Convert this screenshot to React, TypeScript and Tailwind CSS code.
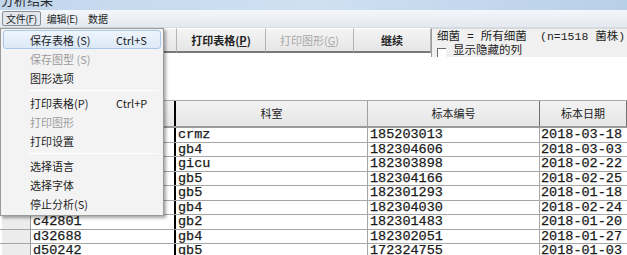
import React from "react";

const rows: [string, string, string, string][] = [
  ["a10473", "crmz", "185203013", "2018-03-18"],
  ["b20516", "gb4", "182304606", "2018-03-03"],
  ["b31902", "gicu", "182303898", "2018-02-22"],
  ["c10277", "gb5", "182304166", "2018-02-25"],
  ["c23415", "gb5", "182301293", "2018-01-18"],
  ["c30964", "gb4", "182304030", "2018-02-24"],
  ["c42801", "gb2", "182301483", "2018-01-20"],
  ["d32688", "gb4", "182302051", "2018-01-27"],
  ["d50242", "gb5", "172324755", "2018-01-03"],
];

function ToolButton({ w, label, mn, disabled }: { w: string; label: string; mn?: string; disabled?: boolean }) {
  return (
    <div
      className={`${w} h-[25px] shrink-0 flex items-center justify-center bg-gradient-to-b from-[#f4f4f4] to-[#e6e6e6] border-r border-[#b4b4b4] border-b-2 border-b-[#7a7a7a] border-t border-t-[#ffffff] text-[11px] leading-[14px] ${disabled ? "text-[#a8a8a8] font-normal" : "text-[#222] font-bold"}`}
    >
      <span>
        {label}
        {mn ? (
          <>
            (<u>{mn}</u>)
          </>
        ) : null}
      </span>
    </div>
  );
}

function MenuItem({ label, shortcut, disabled, active }: { label: string; shortcut?: string; disabled?: boolean; active?: boolean }) {
  return (
    <div
      className={`h-[19px] mx-[2px] flex items-center rounded-[3px] border ${active ? "border-[#aac8ea] bg-gradient-to-b from-[#eef5fd] to-[#dce9f8]" : "border-transparent"} ${disabled ? "text-[#9c9c9c]" : "text-[#1e1e1e]"}`}
    >
      <span className="pl-[26px] w-[112px] whitespace-pre">{label}</span>
      {shortcut ? <span className="whitespace-pre">{shortcut}</span> : null}
    </div>
  );
}

function Sep() {
  return (
    <div className="h-[6px] flex items-center pl-[28px] pr-[4px]">
      <div className="h-px w-full bg-[#dcdcdc] border-b border-b-white" />
    </div>
  );
}

export default function App() {
  return (
    <div className="relative w-[627px] h-[255px] overflow-hidden bg-white [font-family:'Noto_Sans_CJK_SC','Liberation_Sans',sans-serif] text-[11px]">
      {/* title bar */}
      <div className="h-[10px] overflow-hidden bg-gradient-to-r from-[#c2d6ec] via-[#cfe0f2] to-[#b8cfe8]">
        <div className="-mt-[7px] pl-[1px] text-[13px] leading-[14px] text-[#2a2a2a]">分析结果</div>
      </div>
      {/* menu bar */}
      <div className="h-[18px] flex items-center bg-gradient-to-b from-[#f3f6fa] to-[#e4e9f0] border-b border-[#d5dbe3] text-[10px] text-[#1e1e1e]">
        <div className="ml-[2px] h-[15px] px-[3px] flex items-center border border-[#8a8f96] bg-[#e2e7ee] rounded-[2px] tracking-[-0.3px]">文件(F)</div>
        <div className="ml-[5px] px-[1px] tracking-[-0.3px]">编辑(E)</div>
        <div className="ml-[8px] px-[1px]">数据</div>
      </div>
      {/* toolbar */}
      <div className="h-[29px] flex items-start">
        <ToolButton w="w-[88px]" label="保存表格" mn="S" />
        <ToolButton w="w-[89px]" label="保存图型" mn="G" />
        <ToolButton w="w-[89px]" label="打印表格" mn="P" />
        <ToolButton w="w-[88px]" label="打印图形" mn="G" disabled />
        <ToolButton w="w-[77px]" label="继续" />
        <div className="flex-1 h-[29px] bg-[#f0f0f0] border-l border-[#9a9a9a] border-t border-t-[#d8d8d8] pl-[5px] pt-[1px] text-[11.5px] text-[#1e1e1e] [font-family:'Liberation_Mono','Noto_Sans_CJK_SC',monospace]">
          <div className="flex h-[14px] items-center leading-[14px]">
            <span className="w-[103px] whitespace-pre">细菌 = 所有细菌</span>
            <span className="whitespace-pre">(n=1518 菌株)</span>
          </div>
          <div className="flex h-[13px] items-center leading-[13px]">
            <span className="w-[9px] h-[9px] border-l border-t border-[#6a6a6a] bg-white mt-[3px]" />
            <span className="ml-[7px]">显示隐藏的列</span>
          </div>
        </div>
      </div>
      {/* white gap */}
      <div className="h-[43px]" />
      {/* table */}
      <div className="flex flex-col">
        <div className="flex h-[28px] bg-gradient-to-b from-[#f2f2f2] to-[#e6e6e6] border-t border-[#a8a8a8] border-b-2 border-b-[#9a9a9a] text-[#222]">
          <div className="w-[31px] border-r border-[#a0a0a0]" />
          <div className="w-[145px] border-r-2 border-r-black flex items-center justify-center">菌株编号</div>
          <div className="w-[192px] border-r border-[#a0a0a0] flex items-center justify-center">科室</div>
          <div className="w-[172px] border-r border-[#707070] flex items-center justify-center">标本编号</div>
          <div className="flex-1 flex items-center justify-center border-r border-[#707070]">标本日期</div>
        </div>
        {rows.map((r, i) => (
          <div
            key={i}
            className="flex h-[14.5px] border-b border-[#a6a6a6] [font-family:'Liberation_Mono','Noto_Sans_CJK_SC',monospace] text-[13.5px] leading-[13px] text-[#1a1a1a] [-webkit-text-stroke:0.25px_#1a1a1a]"
          >
            <div className="w-[31px] bg-[#ececec] border-r border-[#9a9a9a] border-l-2 border-l-white" />
            <div className="w-[145px] border-r-2 border-r-black pl-[2px] flex items-center">{r[0]}</div>
            <div className="w-[192px] border-r border-[#a6a6a6] pl-[2px] flex items-center">{r[1]}</div>
            <div className="w-[172px] border-r border-[#a6a6a6] pl-[2px] flex items-center">{r[2]}</div>
            <div className="flex-1 pl-[1px] flex items-center">{r[3]}</div>
          </div>
        ))}
      </div>
      {/* dropdown menu */}
      <div className="absolute left-0 top-[28px] w-[164px] h-[188px] bg-[#f3f3f3] border border-[#9a9a9a] shadow-[2px_2px_3px_rgba(0,0,0,0.35)] pt-[1px] text-[11px] leading-[14px]">
        <MenuItem label="保存表格 (S)" shortcut="Ctrl+S" active />
        <MenuItem label="保存图型 (S)" disabled />
        <MenuItem label="图形选项" />
        <Sep />
        <MenuItem label="打印表格(P)" shortcut="Ctrl+P" />
        <MenuItem label="打印图形" disabled />
        <MenuItem label="打印设置" />
        <Sep />
        <MenuItem label="选择语言" />
        <MenuItem label="选择字体" />
        <MenuItem label="停止分析(S)" />
      </div>
    </div>
  );
}
